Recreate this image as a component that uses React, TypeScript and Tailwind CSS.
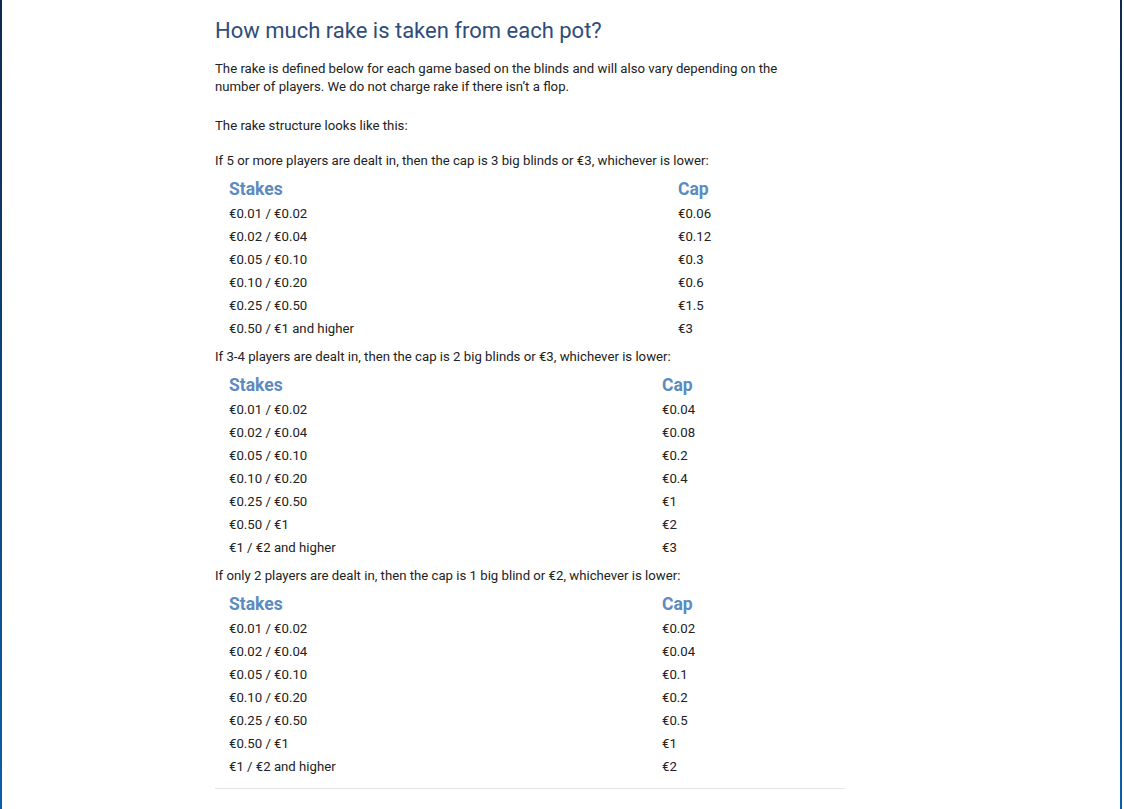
const tables = [
  {
    intro: 'If 5 or more players are dealt in, then the cap is 3 big blinds or €3, whichever is lower:',
    stakesWidth: 'w-[449px]',
    rows: [
      ['€0.01 / €0.02', '€0.06'],
      ['€0.02 / €0.04', '€0.12'],
      ['€0.05 / €0.10', '€0.3'],
      ['€0.10 / €0.20', '€0.6'],
      ['€0.25 / €0.50', '€1.5'],
      ['€0.50 / €1 and higher', '€3'],
    ],
  },
  {
    intro: 'If 3-4 players are dealt in, then the cap is 2 big blinds or €3, whichever is lower:',
    stakesWidth: 'w-[433px]',
    rows: [
      ['€0.01 / €0.02', '€0.04'],
      ['€0.02 / €0.04', '€0.08'],
      ['€0.05 / €0.10', '€0.2'],
      ['€0.10 / €0.20', '€0.4'],
      ['€0.25 / €0.50', '€1'],
      ['€0.50 / €1', '€2'],
      ['€1 / €2 and higher', '€3'],
    ],
  },
  {
    intro: 'If only 2 players are dealt in, then the cap is 1 big blind or €2, whichever is lower:',
    stakesWidth: 'w-[433px]',
    rows: [
      ['€0.01 / €0.02', '€0.02'],
      ['€0.02 / €0.04', '€0.04'],
      ['€0.05 / €0.10', '€0.1'],
      ['€0.10 / €0.20', '€0.2'],
      ['€0.25 / €0.50', '€0.5'],
      ['€0.50 / €1', '€1'],
      ['€1 / €2 and higher', '€2'],
    ],
  },
]

function RakeTable({ intro, stakesWidth, rows }: (typeof tables)[number]) {
  return (
    <div className="mt-[8px] first:mt-0">
      <p className="leading-[18px]">{intro}</p>
      <div className="mt-[7px] pl-[14px]">
        <div className="flex h-[25px] items-center text-[17.5px] font-bold text-[#5b8bc0]">
          <div className={stakesWidth}>Stakes</div>
          <div>Cap</div>
        </div>
        {rows.map(([stakes, cap]) => (
          <div key={stakes} className="flex h-[23px] items-center">
            <div className={stakesWidth}>{stakes}</div>
            <div>{cap}</div>
          </div>
        ))}
      </div>
    </div>
  )
}

export default function App() {
  return (
    <div className="flex min-h-[809px] bg-white font-['Roboto',sans-serif] text-[13.2px] text-[#222]">
      <div className="w-[2px] bg-gradient-to-b from-[#0c2a4f] to-[#0a5fa9]" />
      <main className="w-[1118px] pl-[213px]">
        <div className="w-[630px]">
          <h1 className="mt-[16px] text-[22px] leading-[30px] text-[#2e4d7b]">
            How much rake is taken from each pot?
          </h1>
          <p className="mt-[14px] leading-[18px]">
            The rake is defined below for each game based on the blinds and will also vary depending on the
            <br />
            number of players. We do not charge rake if there isn’t a flop.
          </p>
          <p className="mt-[21px] mb-[17px] leading-[18px]">The rake structure looks like this:</p>
          <div>
            {tables.map((t) => (
              <RakeTable key={t.intro} {...t} />
            ))}
          </div>
          <div className="mt-[10px] h-px bg-[#e4e4e4]" />
        </div>
      </main>
      <div className="w-[2px] bg-gradient-to-b from-[#0c2a4f] to-[#0a5fa9]" />
      <div className="flex-1" />
    </div>
  )
}
